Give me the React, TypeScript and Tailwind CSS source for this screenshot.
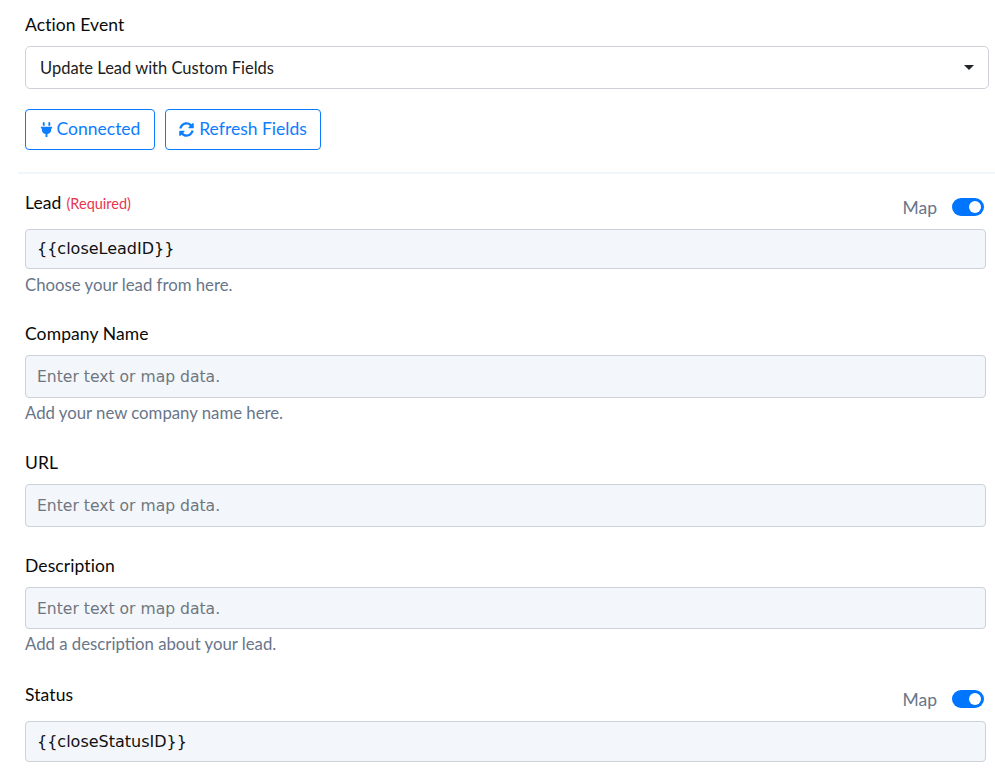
import { FaPlug, FaSyncAlt } from 'react-icons/fa';

const Toggle = () => (
    <span className="relative block w-[32px] h-[18px] rounded-full bg-[#0075ff]">
        <span className="absolute right-[3px] top-[3px] w-[12px] h-[12px] rounded-full bg-white" />
    </span>
);

const MapSwitch = () => (
    <div className="flex items-center gap-[15px] mr-[5px]">
        <span className="pt-[2px] text-[17.5px] leading-[20px] text-[#68768a]">Map</span>
        <Toggle />
    </div>
);

interface FieldProps {
    label: string;
    value?: string;
    help?: string;
    required?: boolean;
    map?: boolean;
    className: string;
    inputClass: string;
}

const Field = ({ label, value, help, required, map, className, inputClass }: FieldProps) => (
    <div className={className}>
        <div className="flex items-start justify-between pr-[6px] h-[20px]">
            <div className="text-[17.5px] leading-[20px] tracking-[0.1px] text-[#0a0a0a]">
                {label}
                {required && <span className="ml-[5px] text-[14.5px] tracking-normal text-[#e8364f]">(Required)</span>}
            </div>
            {map && <div className="relative top-[3px]"><MapSwitch /></div>}
        </div>
        <div
            className={`mr-[9px] flex items-center px-[11px] rounded-[4px] border border-[#cdd2d8] bg-[#f3f6fb] font-['DejaVu_Sans',sans-serif] ${inputClass} ${value ? 'text-[16px] text-[#111111]' : 'text-[15.6px] text-[#6f7680]'}`}
        >
            {value ?? 'Enter text or map data.'}
        </div>
        {help && <div className="text-[16.75px] leading-[20px] text-[#68768a]">{help}</div>}
    </div>
);

const App = () => {
    return (
        <div className="w-[995px] h-[780px] overflow-hidden bg-white font-['Lato',sans-serif] pl-[25px]">
            <div className="pt-[15px] text-[17.5px] leading-[20px] tracking-[0.1px] text-[#0a0a0a]">Action Event</div>
            <div className="mt-[11px] mr-[6px] h-[43px] flex items-center justify-between pl-[14px] pr-[14px] rounded-[5px] border border-[#ced2d8] text-[16.5px] text-[#1c1c1c]">
                <span className="pt-[2px]">Update Lead with Custom Fields</span>
                <span className="w-0 h-0 border-x-[5px] border-x-transparent border-t-[5px] border-t-[#212529]" />
            </div>
            <div className="mt-[20px] flex gap-[10px]">
                <button className="h-[41px] w-[130px] flex items-center justify-center gap-[4px] rounded-[4px] border border-[#0a7bff] text-[17.5px] text-[#0d7dff]">
                    <FaPlug className="w-[13px] h-[15px]" />
                    <span>Connected</span>
                </button>
                <button className="h-[41px] w-[156px] flex items-center justify-center gap-[5px] rounded-[4px] border border-[#0a7bff] text-[17.5px] text-[#0d7dff]">
                    <FaSyncAlt className="w-[15px] h-[15px]" />
                    <span>Refresh Fields</span>
                </button>
            </div>
            <div className="mt-[22px] -ml-[7px] h-[2px] bg-[#eff7fd]" />
            <Field className="mt-[19px]" inputClass="mt-[16px] mb-[6px] h-[40px]" label="Lead" required map value="{{closeLeadID}}" help="Choose your lead from here." />
            <Field className="mt-[29px]" inputClass="mt-[11px] mb-[5px] h-[43px] pt-[2px]" label="Company Name" help="Add your new company name here." />
            <Field className="mt-[30px]" inputClass="mt-[11px] h-[43px] pt-[2px]" label="URL" />
            <Field className="mt-[29px]" inputClass="mt-[11px] mb-[5px] h-[42px] pt-[3px]" label="Description" help="Add a description about your lead." />
            <Field className="mt-[31px]" inputClass="mt-[16px] h-[41px]" label="Status" map value="{{closeStatusID}}" />
        </div>
    );
};

export default App;
